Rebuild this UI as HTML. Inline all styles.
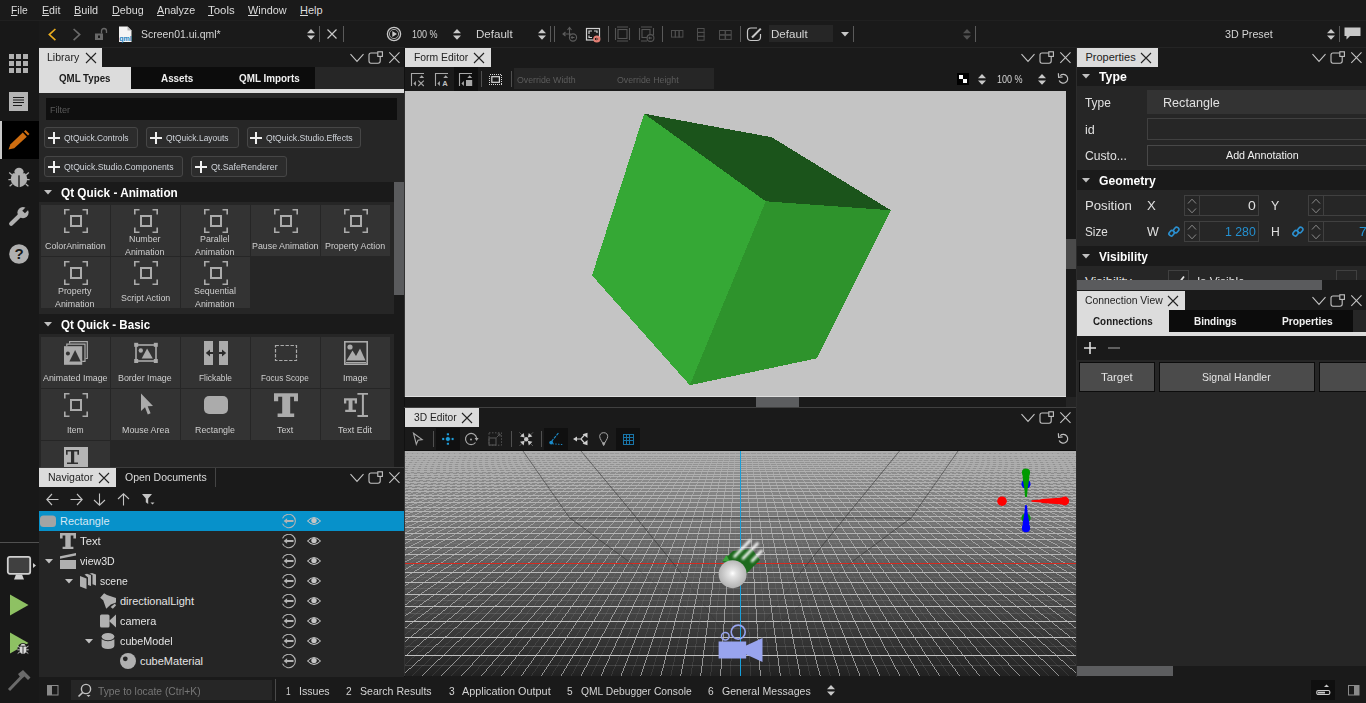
<!DOCTYPE html>
<html><head><meta charset="utf-8"><title>Qt Design Studio</title><style>html,body{margin:0;padding:0}body{width:1366px;height:703px;overflow:hidden;background:#1a1a1a;position:relative;font-family:"Liberation Sans",sans-serif}
body div,.t,.i{position:absolute}div{box-sizing:content-box}
.t{white-space:nowrap;transform-origin:0 50%;display:block}
.i{display:block;overflow:hidden}u{text-decoration-thickness:1px;text-underline-offset:1px}</style></head><body>
<div style="left:404px;top:48px;width:673px;height:629px;background:#1a1a1a;"></div>
<div style="left:404px;top:48px;width:1px;height:629px;background:#111;"></div>
<div style="left:404px;top:91px;width:1px;height:306px;background:#333;"></div>
<div style="left:404px;top:451px;width:1px;height:225px;background:#333;"></div>
<div style="left:405px;top:48px;width:86px;height:19px;background:#dcdcdc;"></div>
<span class="t" style="left:413.70px;top:51px;font-size:11px;line-height:12px;color:#222;transform:scaleX(0.9444);">Form Editor</span>
<svg class="i" style="left:472.7px;top:52.3px;" width="12" height="12" viewBox="0 0 12 12"><path d="M1 1 L11 11 M11 1 L1 11" stroke="#222" stroke-width="1.1" fill="none"/></svg>
<svg class="i" style="left:1020.5px;top:48px;" width="52" height="19" viewBox="0 0 52 19"><g fill="none" stroke="#c4c4c4" stroke-width="1.1"><path d="M0.5 6.2 L7 13.4 L13.5 6.2"/><path d="M27.5 5 H21 Q19 5 19 7 V13 Q19 15.2 21 15.2 H28 Q30.2 15.2 30.2 13 V9"/><rect x="27.8" y="3.8" width="4.6" height="4.6"/><path d="M39.3 4.3 L49.5 14.8 M49.5 4.3 L39.3 14.8"/></g></svg>
<svg class="i" style="left:410px;top:72px;" width="16" height="15" viewBox="0 0 16 15"><path fill="none" stroke="#a8a8a8" stroke-width="1.1" d="M1.5 14 V1.5 H14"/><path d="M11.7 3.3 L14.1 5.9 H9.3Z M3.4 11.5 L5.9 9 V14Z" fill="#a8a8a8"/><path fill="none" stroke="#a8a8a8" stroke-width="1.1" d="M8.3 8.6 L13.8 14 M13.8 8.6 L8.3 14"/></svg>
<svg class="i" style="left:434px;top:72px;" width="16" height="15" viewBox="0 0 16 15"><path fill="none" stroke="#a8a8a8" stroke-width="1.1" d="M1.5 14 V1.5 H14"/><path d="M11.7 3.3 L14.1 5.9 H9.3Z M3.4 11.5 L5.9 9 V14Z" fill="#a8a8a8"/><text x="8.3" y="14" font-family="Liberation Sans, sans-serif" font-size="7.6" font-weight="bold" fill="#c0c0c0">A</text></svg>
<div style="left:454px;top:67px;width:24px;height:24px;background:#0f0f0f;"></div>
<svg class="i" style="left:458px;top:72px;" width="16" height="15" viewBox="0 0 16 15"><path fill="none" stroke="#a8a8a8" stroke-width="1.1" d="M1.5 14 V1.5 H14"/><path d="M11.7 3.3 L14.1 5.9 H9.3Z M3.4 11.5 L5.9 9 V14Z" fill="#a8a8a8"/><rect x="8" y="8" width="6.2" height="6" fill="#a8a8a8"/></svg>
<div style="left:481px;top:71px;width:1px;height:16px;background:#505050;"></div>
<svg class="i" style="left:488px;top:73px;" width="15" height="13" viewBox="0 0 15 13"><rect x="1.5" y="1.5" width="12" height="10" fill="none" stroke="#d8d8d8" stroke-width="1" stroke-dasharray="1 1" shape-rendering="crispEdges"/><rect x="3.8" y="3.7" width="7.6" height="5.6" fill="none" stroke="#d8d8d8" stroke-width="1.2"/></svg>
<div style="left:511px;top:71px;width:1px;height:16px;background:#505050;"></div>
<div style="left:514px;top:68px;width:200px;height:21px;background:#262626;"></div>
<span class="t" style="left:517.00px;top:74px;font-size:9.5px;line-height:11px;color:#5c5c5c;transform:scaleX(0.9245);">Override Width</span>
<span class="t" style="left:617.00px;top:74px;font-size:9.5px;line-height:11px;color:#5c5c5c;transform:scaleX(0.9255);">Override Height</span>
<svg class="i" style="left:957px;top:73px;" width="12" height="12" viewBox="0 0 12 12"><rect width="12" height="12" fill="#000"/><rect x="2" y="2" width="4" height="4" fill="#fff"/><rect x="6" y="6" width="4" height="4" fill="#fff"/></svg>
<svg class="i" style="left:978px;top:73.5px;" width="8" height="11" viewBox="0 0 8 11"><path d="M0 4.2 L4 0 L8 4.2Z M0 6.6 L8 6.6 L4 10.8Z" fill="#c8c8c8"/></svg>
<span class="t" style="left:997.00px;top:73px;font-size:10.5px;line-height:12px;color:#d4d4d4;transform:scaleX(0.8609);">100 %</span>
<svg class="i" style="left:1038px;top:73.5px;" width="8" height="11" viewBox="0 0 8 11"><path d="M0 4.2 L4 0 L8 4.2Z M0 6.6 L8 6.6 L4 10.8Z" fill="#c8c8c8"/></svg>
<svg class="i" style="left:1057px;top:72px;" width="13" height="13" viewBox="0 0 13 13"><path d="M3.2 3.6 A4.4 4.4 0 1 1 2.2 8.4" fill="none" stroke="#c0c0c0" stroke-width="1.2"/><path d="M1.4 1.2 L1.6 5.4 L5.6 4.8" fill="none" stroke="#c0c0c0" stroke-width="1.2"/></svg>
<div style="left:405px;top:91px;width:661px;height:306px;background:#c4c4c4;"></div>
<svg class="i" style="left:405px;top:91px" width="661" height="306" viewBox="405 91 661 306" shape-rendering="crispEdges"><path d="M644.2 113.7 L771.6 137.2 L890.9 210.3 L765.7 201.3Z" fill="#1b541b"/><path d="M644.2 113.7 L765.7 201.3 L689.8 385.2 L592 275.4Z" fill="#35a835"/><path d="M765.7 201.3 L890.9 210.3 L816.6 358.4 L689.8 385.2Z" fill="#2e932c"/></svg>
<div style="left:405px;top:396px;width:661px;height:1px;background:#dedede;"></div>
<div style="left:1066px;top:239px;width:10px;height:30px;background:#4a4a4a;"></div>
<div style="left:1066px;top:397px;width:10px;height:10px;background:#242424;"></div>
<div style="left:756px;top:397px;width:43px;height:10px;background:#5c5d5f;"></div>
<div style="left:404px;top:407px;width:673px;height:1px;background:#404040;"></div>
<div style="left:405px;top:408px;width:74px;height:19px;background:#dcdcdc;"></div>
<span class="t" style="left:413.50px;top:411px;font-size:11px;line-height:12px;color:#222;transform:scaleX(0.9304);">3D Editor</span>
<svg class="i" style="left:460.7px;top:412.3px;" width="12" height="12" viewBox="0 0 12 12"><path d="M1 1 L11 11 M11 1 L1 11" stroke="#222" stroke-width="1.1" fill="none"/></svg>
<svg class="i" style="left:1020.5px;top:408px;" width="52" height="19" viewBox="0 0 52 19"><g fill="none" stroke="#c4c4c4" stroke-width="1.1"><path d="M0.5 6.2 L7 13.4 L13.5 6.2"/><path d="M27.5 5 H21 Q19 5 19 7 V13 Q19 15.2 21 15.2 H28 Q30.2 15.2 30.2 13 V9"/><rect x="27.8" y="3.8" width="4.6" height="4.6"/><path d="M39.3 4.3 L49.5 14.8 M49.5 4.3 L39.3 14.8"/></g></svg>
<svg class="i" style="left:412px;top:432px;" width="13" height="14" viewBox="0 0 13 14"><path d="M1.5 1.2 L10.2 7.6 L6 8.2 L4.3 12.2Z" fill="none" stroke="#a8a8a8" stroke-width="1.1"/></svg>
<div style="left:433px;top:431px;width:1px;height:16px;background:#505050;"></div>
<div style="left:436px;top:428px;width:24px;height:22px;background:#101010;"></div>
<svg class="i" style="left:441px;top:432px;" width="14" height="14" viewBox="0 0 14 14"><path d="M7 2 V12 M2 7 H12" stroke="#1e9cd8" stroke-width="0.6" stroke-opacity="0.45"/><circle cx="6.9" cy="7" r="2.1" fill="#1e9cd8"/><g fill="#1e9cd8"><rect x="5.8" y="1.3" width="2.2" height="1.8"/><rect x="5.8" y="10.9" width="2.2" height="1.8"/><rect x="1.2" y="5.9" width="1.9" height="2.2"/><rect x="10.7" y="5.9" width="1.9" height="2.2"/></g></svg>
<svg class="i" style="left:464px;top:432px;" width="15" height="14" viewBox="0 0 15 14"><path d="M11.5 10.5 A5.6 5.6 0 1 1 12.6 6" fill="none" stroke="#a8a8a8" stroke-width="1.2"/><path d="M10.6 6 H14.6 L12.6 9Z" fill="#a8a8a8"/><circle cx="7" cy="7.5" r="1" fill="#a8a8a8"/></svg>
<svg class="i" style="left:488px;top:432px;" width="15" height="14" viewBox="0 0 15 14"><rect x="1" y="6" width="7" height="7" fill="none" stroke="#555" stroke-width="1.1"/><rect x="1" y="0.8" width="12.5" height="12.4" fill="none" stroke="#555" stroke-width="1" stroke-dasharray="1.5 1.5"/><path d="M8.5 5.5 L12 2 M9.5 2 H12 V4.5" stroke="#555" stroke-width="1" fill="none"/></svg>
<div style="left:511px;top:431px;width:1px;height:16px;background:#505050;"></div>
<svg class="i" style="left:519px;top:432px;" width="15" height="14" viewBox="0 0 15 14"><g fill="#c8c8c8"><circle cx="7.2" cy="7.2" r="2.2"/><path d="M5.6 5.6 L1 4.6 L4.6 1Z M8.8 5.6 L13.4 4.6 L9.8 1Z M5.6 8.8 L1 9.8 L4.6 13.4Z M8.8 8.8 L13.4 9.8 L9.8 13.4Z"/></g><path d="M0.3 0.3 L3 3 M14.1 0.3 L11.4 3 M0.3 14.1 L3 11.4 M14.1 14.1 L11.4 11.4" stroke="#c8c8c8" stroke-width="0.6" stroke-opacity="0.6"/></svg>
<div style="left:541px;top:431px;width:1px;height:16px;background:#505050;"></div>
<div style="left:544px;top:428px;width:24px;height:22px;background:#101010;"></div>
<svg class="i" style="left:549px;top:432px;" width="15" height="14" viewBox="0 0 15 14"><path d="M9.4 1 L1.6 10.6" stroke="#1b8ccb" stroke-width="1.1" stroke-dasharray="3 1" fill="none"/><path d="M3.5 11.8 L14 12.6" stroke="#1b8ccb" stroke-width="1" stroke-dasharray="1.4 1.4" fill="none"/><circle cx="2.2" cy="10.6" r="1.9" fill="#1b8ccb"/></svg>
<svg class="i" style="left:573px;top:432px;" width="15" height="14" viewBox="0 0 15 14"><path d="M3 7 H8 L11.5 3 M8 7 L11.5 11" stroke="#d0d0d0" stroke-width="1.2" fill="none"/><path d="M0 7 L4 4.4 V9.6Z M14.5 0.8 V6 L9.6 2.2Z M14.5 13.2 V8 L9.6 11.8Z" fill="#d0d0d0"/></svg>
<svg class="i" style="left:599px;top:432px;" width="10" height="14" viewBox="0 0 10 14"><path d="M4.7 0.7 C7.8 0.7 8.7 2.7 8.7 4.6 C8.7 7 5.8 9.6 5 13.3 H4.4 C3.6 9.6 0.7 7 0.7 4.6 C0.7 2.7 1.6 0.7 4.7 0.7Z" fill="none" stroke="#a8a8a8" stroke-width="1"/><path d="M3.2 10.2 H6.2 L4.7 13.6Z" fill="#a8a8a8"/></svg>
<div style="left:616px;top:428px;width:24px;height:22px;background:#101010;"></div>
<svg class="i" style="left:622px;top:433px;" width="12" height="12" viewBox="0 0 12 12"><path d="M1.5 1.5 H11 V11 H1.5Z M1.5 4.7 H11 M1.5 7.8 H11 M4.7 1.5 V11 M7.8 1.5 V11" stroke="#1975a8" stroke-width="1" fill="none" shape-rendering="crispEdges"/></svg>
<svg class="i" style="left:1057px;top:432px;" width="13" height="13" viewBox="0 0 13 13"><path d="M3.2 3.6 A4.4 4.4 0 1 1 2.2 8.4" fill="none" stroke="#c0c0c0" stroke-width="1.2"/><path d="M1.4 1.2 L1.6 5.4 L5.6 4.8" fill="none" stroke="#c0c0c0" stroke-width="1.2"/></svg>
<div style="left:404px;top:450px;width:673px;height:1px;background:#0f0f0f;"></div>
<svg class="i" style="left:405px;top:451px" width="671" height="225" viewBox="0 0 671 225"><defs><linearGradient id="gbg" x1="0" y1="0" x2="0" y2="1"><stop offset="0" stop-color="#999"/><stop offset="1" stop-color="#222"/></linearGradient><linearGradient id="gl" gradientUnits="userSpaceOnUse" x1="0" y1="0" x2="0" y2="225"><stop offset="0" stop-color="#aeaeae"/><stop offset="1" stop-color="#c2c2c2"/></linearGradient><linearGradient id="gm" gradientUnits="userSpaceOnUse" x1="0" y1="0" x2="0" y2="225"><stop offset="0.12" stop-color="#fff" stop-opacity="0"/><stop offset="0.45" stop-color="#fff" stop-opacity="0.07"/><stop offset="0.75" stop-color="#fff" stop-opacity="0.12"/><stop offset="1" stop-color="#fff" stop-opacity="0.13"/></linearGradient><radialGradient id="gs" cx="0.5" cy="0.47" r="0.5"><stop offset="0" stop-color="#fff"/><stop offset="0.25" stop-color="#e4e4e4"/><stop offset="1" stop-color="#b4b4b4"/></radialGradient><filter id="bl" x="-0.5" y="-0.5" width="2" height="2"><feGaussianBlur stdDeviation="1.1"/></filter></defs><rect width="671" height="225" fill="url(#gbg)"/><path d="M0 214.5H671M0 195.5H671M0 177.5H671M0 162.5H671M0 149.5H671M0 137.5H671M0 126.5H671M0 116.5H671M0 107.5H671M0 99.5H671M0 92.5H671M0 85.5H671M0 79.5H671M0 73.5H671M0 68.5H671M0 63.5H671M0 58.5H671M0 53.5H671M0 49.5H671M0 46.5H671M0 42.5H671M0 38.5H671M0 35.5H671M0 32.5H671M0 29.5H671M0 27.5H671M0 24.5H671M0 21.5H671M0 19.5H671M0 17.5H671M0 15.5H671M0 13.5H671M0 11.5H671M0 9.5H671M0 7.5H671M0 5.5H671M0 4.5H671M0 2.5H671M0 0.5H671M0 -0.5H671" stroke="url(#gm)" stroke-width="1" fill="none" shape-rendering="crispEdges"/><path d="M2.61 0L-970.11 225M7.69 0L-950.18 225M12.78 0L-930.25 225M17.86 0L-910.31 225M22.94 0L-890.38 225M28.02 0L-870.45 225M33.11 0L-850.51 225M38.19 0L-830.58 225M43.27 0L-810.65 225M48.35 0L-790.71 225M53.43 0L-770.78 225M58.52 0L-750.85 225M63.60 0L-730.92 225M68.68 0L-710.98 225M73.76 0L-691.05 225M78.85 0L-671.12 225M83.93 0L-651.18 225M89.01 0L-631.25 225M94.09 0L-611.32 225M99.18 0L-591.38 225M104.26 0L-571.45 225M109.34 0L-551.52 225M114.42 0L-531.59 225M119.50 0L-511.65 225M124.59 0L-491.72 225M129.67 0L-471.79 225M134.75 0L-451.85 225M139.83 0L-431.92 225M144.92 0L-411.99 225M150.00 0L-392.05 225M155.08 0L-372.12 225M160.16 0L-352.19 225M165.24 0L-332.26 225M170.33 0L-312.32 225M175.41 0L-292.39 225M180.49 0L-272.46 225M185.57 0L-252.52 225M190.66 0L-232.59 225M195.74 0L-212.66 225M200.82 0L-192.72 225M205.90 0L-172.79 225M210.98 0L-152.86 225M216.07 0L-132.93 225M221.15 0L-112.99 225M226.23 0L-93.06 225M231.31 0L-73.13 225M236.40 0L-53.19 225M241.48 0L-33.26 225M246.56 0L-13.33 225M251.64 0L6.61 225M256.73 0L26.54 225M261.81 0L46.47 225M266.89 0L66.40 225M271.97 0L86.34 225M277.05 0L106.27 225M282.14 0L126.20 225M287.22 0L146.14 225M292.30 0L166.07 225M297.38 0L186.00 225M302.47 0L205.94 225M307.55 0L225.87 225M312.63 0L245.80 225M317.71 0L265.73 225M322.79 0L285.67 225M327.88 0L305.60 225M332.96 0L325.53 225M338.04 0L345.47 225M343.12 0L365.40 225M348.21 0L385.33 225M353.29 0L405.27 225M358.37 0L425.20 225M363.45 0L445.13 225M368.53 0L465.06 225M373.62 0L485.00 225M378.70 0L504.93 225M383.78 0L524.86 225M388.86 0L544.80 225M393.95 0L564.73 225M399.03 0L584.66 225M404.11 0L604.60 225M409.19 0L624.53 225M414.27 0L644.46 225M419.36 0L664.39 225M424.44 0L684.33 225M429.52 0L704.26 225M434.60 0L724.19 225M439.69 0L744.13 225M444.77 0L764.06 225M449.85 0L783.99 225M454.93 0L803.93 225M460.02 0L823.86 225M465.10 0L843.79 225M470.18 0L863.72 225M475.26 0L883.66 225M480.34 0L903.59 225M485.43 0L923.52 225M490.51 0L943.46 225M495.59 0L963.39 225M500.67 0L983.32 225M505.76 0L1003.26 225M510.84 0L1023.19 225M515.92 0L1043.12 225M521.00 0L1063.05 225M526.08 0L1082.99 225M531.17 0L1102.92 225M536.25 0L1122.85 225M541.33 0L1142.79 225M546.41 0L1162.72 225M551.50 0L1182.65 225M556.58 0L1202.59 225M561.66 0L1222.52 225M566.74 0L1242.45 225M571.82 0L1262.38 225M576.91 0L1282.32 225M581.99 0L1302.25 225M587.07 0L1322.18 225M592.15 0L1342.12 225M597.24 0L1362.05 225M602.32 0L1381.98 225M607.40 0L1401.92 225M612.48 0L1421.85 225M617.57 0L1441.78 225M622.65 0L1461.71 225M627.73 0L1481.65 225M632.81 0L1501.58 225M637.89 0L1521.51 225M642.98 0L1541.45 225M648.06 0L1561.38 225M653.14 0L1581.31 225M658.22 0L1601.25 225M663.31 0L1621.18 225M668.39 0L1641.11 225" stroke="url(#gm)" stroke-width="0.7" fill="none" shape-rendering="crispEdges"/><path d="M0.07 0L-980.08 225M5.15 0L-960.15 225M10.24 0L-940.21 225M15.32 0L-920.28 225M20.40 0L-900.35 225M25.48 0L-880.41 225M30.56 0L-860.48 225M35.65 0L-840.55 225M40.73 0L-820.61 225M45.81 0L-800.68 225M50.89 0L-780.75 225M55.98 0L-760.82 225M61.06 0L-740.88 225M66.14 0L-720.95 225M71.22 0L-701.02 225M76.30 0L-681.08 225M81.39 0L-661.15 225M86.47 0L-641.22 225M91.55 0L-621.28 225M96.63 0L-601.35 225M101.72 0L-581.42 225M106.80 0L-561.49 225M111.88 0L-541.55 225M116.96 0L-521.62 225M122.05 0L-501.69 225M127.13 0L-481.75 225M132.21 0L-461.82 225M137.29 0L-441.89 225M142.37 0L-421.95 225M147.46 0L-402.02 225M152.54 0L-382.09 225M157.62 0L-362.16 225M162.70 0L-342.22 225M167.79 0L-322.29 225M172.87 0L-302.36 225M177.95 0L-282.42 225M183.03 0L-262.49 225M188.11 0L-242.56 225M193.20 0L-222.62 225M198.28 0L-202.69 225M203.36 0L-182.76 225M208.44 0L-162.83 225M213.53 0L-142.89 225M218.61 0L-122.96 225M223.69 0L-103.03 225M228.77 0L-83.09 225M233.85 0L-63.16 225M238.94 0L-43.23 225M244.02 0L-23.29 225M249.10 0L-3.36 225M254.18 0L16.57 225M259.27 0L36.50 225M264.35 0L56.44 225M269.43 0L76.37 225M274.51 0L96.30 225M279.60 0L116.24 225M284.68 0L136.17 225M289.76 0L156.10 225M294.84 0L176.04 225M299.92 0L195.97 225M305.01 0L215.90 225M310.09 0L235.83 225M315.17 0L255.77 225M320.25 0L275.70 225M325.34 0L295.63 225M330.42 0L315.57 225M340.58 0L355.43 225M345.66 0L375.37 225M350.75 0L395.30 225M355.83 0L415.23 225M360.91 0L435.17 225M365.99 0L455.10 225M371.08 0L475.03 225M376.16 0L494.96 225M381.24 0L514.90 225M386.32 0L534.83 225M391.40 0L554.76 225M396.49 0L574.70 225M401.57 0L594.63 225M406.65 0L614.56 225M411.73 0L634.50 225M416.82 0L654.43 225M421.90 0L674.36 225M426.98 0L694.29 225M432.06 0L714.23 225M437.15 0L734.16 225M442.23 0L754.09 225M447.31 0L774.03 225M452.39 0L793.96 225M457.47 0L813.89 225M462.56 0L833.83 225M467.64 0L853.76 225M472.72 0L873.69 225M477.80 0L893.62 225M482.89 0L913.56 225M487.97 0L933.49 225M493.05 0L953.42 225M498.13 0L973.36 225M503.21 0L993.29 225M508.30 0L1013.22 225M513.38 0L1033.16 225M518.46 0L1053.09 225M523.54 0L1073.02 225M528.63 0L1092.95 225M533.71 0L1112.89 225M538.79 0L1132.82 225M543.87 0L1152.75 225M548.95 0L1172.69 225M554.04 0L1192.62 225M559.12 0L1212.55 225M564.20 0L1232.49 225M569.28 0L1252.42 225M574.37 0L1272.35 225M579.45 0L1292.28 225M584.53 0L1312.22 225M589.61 0L1332.15 225M594.70 0L1352.08 225M599.78 0L1372.02 225M604.86 0L1391.95 225M609.94 0L1411.88 225M615.02 0L1431.82 225M620.11 0L1451.75 225M625.19 0L1471.68 225M630.27 0L1491.61 225M635.35 0L1511.55 225M640.44 0L1531.48 225M645.52 0L1551.41 225M650.60 0L1571.35 225M655.68 0L1591.28 225M660.76 0L1611.21 225M665.85 0L1631.15 225M670.93 0L1651.08 225" stroke="url(#gl)" stroke-width="0.7" fill="none" shape-rendering="crispEdges"/><path d="M0 225.5H671M0 204.5H671M0 186.5H671M0 170.5H671M0 155.5H671M0 143.5H671M0 131.5H671M0 121.5H671M0 112.5H671M0 103.5H671M0 96.5H671M0 88.5H671M0 82.5H671M0 76.5H671M0 70.5H671M0 65.5H671M0 60.5H671M0 56.5H671M0 51.5H671M0 47.5H671M0 44.5H671M0 40.5H671M0 37.5H671M0 34.5H671M0 31.5H671M0 28.5H671M0 25.5H671M0 23.5H671M0 20.5H671M0 18.5H671M0 16.5H671M0 14.5H671M0 12.5H671M0 10.5H671M0 8.5H671M0 6.5H671M0 4.5H671M0 3.5H671M0 1.5H671M0 0.5H671" stroke="url(#gl)" stroke-width="1" fill="none" shape-rendering="crispEdges"/><path d="M0 112.5H671" stroke="#d42a20" stroke-width="1" shape-rendering="crispEdges"/><path d="M335.5 0V225" stroke="#16a0dc" stroke-width="1" shape-rendering="crispEdges"/><path d="M118.0 0.0L164.4 66.5L223.0 110.0 M176.0 0.0L231.6 67.0L276.0 122.0 M164.4 66.9H506.5 M553.0 0.0L506.5 66.5L448.0 110.0 M494.5 0.0L439.7 67.0L395.0 122.0" stroke="#2a2a2a" stroke-opacity="0.62" stroke-width="0.9" fill="none"/><path d="M223.0 110.0L317.0 189.0 M276.0 122.0L321.0 185.0 M448.0 110.0L354.0 189.0 M395.0 122.0L350.0 185.0" stroke="#2a2a2a" stroke-opacity="0.25" stroke-width="1" fill="none"/><path d="M317.5 110.0L328.0 100.0L347.0 98.0L355.0 109.0L342.0 122.0L330.0 119.0Z" fill="#1d6a1d"/><path d="M317.5 110.0L321.5 104.0L325.0 111.0Z" fill="#3aa63a"/><g stroke="#fff" stroke-width="2.6" stroke-linecap="round" stroke-opacity="0.95" fill="none" filter="url(#bl)"><path d="M329.6 105.5L345.0 89.5 M338.0 107.5L352.5 92.5 M347.0 110.0L356.6 100.0"/></g><circle cx="327.6" cy="123.20000000000005" r="14" fill="url(#gs)"/><rect x="313.6" y="190.5" width="27.6" height="17" fill="#98a4ee"/><path d="M339.0 195.5L357.5 187.0V211L339.0 202.5Z" fill="#98a4ee"/><circle cx="320.3" cy="185.3" r="3.8" fill="none" stroke="#98a4ee" stroke-width="1.5"/><circle cx="333.2" cy="181.1" r="7" fill="none" stroke="#98a4ee" stroke-width="1.6"/><circle cx="621" cy="33.0" r="4.6" fill="#0000ff"/><circle cx="621" cy="67.0" r="4.6" fill="#009a00"/><circle cx="621" cy="21.6" r="4.1" fill="#009a00"/><path d="M617.6 23.0L624.4 23.0L624.2 28.0L622.6 38.0L622 46.0H620L619.4 38.0L617.8 28.0Z" fill="#009a00"/><circle cx="621" cy="77.2" r="4.1" fill="#0000ff"/><path d="M617.6 76.0L624.4 76.0L624.2 71.0L622.6 62.0L622 54.3H620L619.4 62.0L617.8 71.0Z" fill="#0000ff"/><circle cx="597" cy="50.2" r="4.8" fill="#ff0000"/><circle cx="659.8" cy="50.0" r="4.4" fill="#ff0000"/><path d="M626.5 49.3L636 48.6L637 47.9L658 46.4V53.6L637 52.1L636 51.4L626.5 50.7Z" fill="#ff0000"/></svg>
<div style="left:1076px;top:48px;width:1px;height:629px;background:#2c2c2c;"></div>
<div style="left:39px;top:48px;width:365px;height:419px;background:#1a1a1a;"></div>
<div style="left:39px;top:48px;width:63px;height:19px;background:#dcdcdc;"></div>
<span class="t" style="left:47.30px;top:51px;font-size:11px;line-height:12px;color:#222;transform:scaleX(0.9565);">Library</span>
<svg class="i" style="left:84.7px;top:52.3px;" width="12" height="12" viewBox="0 0 12 12"><path d="M1 1 L11 11 M11 1 L1 11" stroke="#222" stroke-width="1.1" fill="none"/></svg>
<svg class="i" style="left:349.5px;top:48px;" width="52" height="19" viewBox="0 0 52 19"><g fill="none" stroke="#c4c4c4" stroke-width="1.1"><path d="M0.5 6.2 L7 13.4 L13.5 6.2"/><path d="M27.5 5 H21 Q19 5 19 7 V13 Q19 15.2 21 15.2 H28 Q30.2 15.2 30.2 13 V9"/><rect x="27.8" y="3.8" width="4.6" height="4.6"/><path d="M39.3 4.3 L49.5 14.8 M49.5 4.3 L39.3 14.8"/></g></svg>
<div style="left:39px;top:67px;width:92px;height:22px;background:#dcdcdc;"></div>
<div style="left:131px;top:67px;width:184px;height:22px;background:#0c0c0c;"></div>
<div style="left:315px;top:67px;width:89px;height:22px;background:#262626;"></div>
<div style="left:39px;top:89px;width:365px;height:4px;background:#dcdcdc;"></div>
<span class="t" style="left:59.40px;top:72px;font-size:11px;line-height:12px;color:#1a1a1a;font-weight:bold;transform:scaleX(0.8831);">QML Types</span>
<span class="t" style="left:161.40px;top:72px;font-size:11px;line-height:12px;color:#f0f0f0;font-weight:bold;transform:scaleX(0.8970);">Assets</span>
<span class="t" style="left:239.00px;top:72px;font-size:11px;line-height:12px;color:#f0f0f0;font-weight:bold;transform:scaleX(0.8969);">QML Imports</span>
<div style="left:39px;top:93px;width:365px;height:89px;background:#262626;"></div>
<div style="left:39px;top:182px;width:355px;height:285px;background:#262626;"></div>
<div style="left:46px;top:98px;width:351px;height:22px;background:#0f0f0f;"></div>
<span class="t" style="left:49.50px;top:104px;font-size:9.5px;line-height:11px;color:#585858;transform:scaleX(0.9507);">Filter</span>
<div style="left:44px;top:127px;width:92px;height:19px;background:#2c2c2c;border:1px solid #464646;border-radius:3px;"></div>
<svg class="i" style="left:47.5px;top:131.5px;" width="12" height="12" viewBox="0 0 12 12"><path d="M6 0 V12 M0 6 H12" stroke="#f0f0f0" stroke-width="2" fill="none"/></svg>
<span class="t" style="left:64.00px;top:132px;font-size:9.5px;line-height:11px;color:#d0d4da;transform:scaleX(0.8928);">QtQuick.Controls</span>
<div style="left:146px;top:127px;width:90.5px;height:19px;background:#2c2c2c;border:1px solid #464646;border-radius:3px;"></div>
<svg class="i" style="left:149.5px;top:131.5px;" width="12" height="12" viewBox="0 0 12 12"><path d="M6 0 V12 M0 6 H12" stroke="#f0f0f0" stroke-width="2" fill="none"/></svg>
<span class="t" style="left:166.00px;top:132px;font-size:9.5px;line-height:11px;color:#d0d4da;transform:scaleX(0.8910);">QtQuick.Layouts</span>
<div style="left:246.5px;top:127px;width:112.5px;height:19px;background:#2c2c2c;border:1px solid #464646;border-radius:3px;"></div>
<svg class="i" style="left:250.0px;top:131.5px;" width="12" height="12" viewBox="0 0 12 12"><path d="M6 0 V12 M0 6 H12" stroke="#f0f0f0" stroke-width="2" fill="none"/></svg>
<span class="t" style="left:265.70px;top:132px;font-size:9.5px;line-height:11px;color:#d0d4da;transform:scaleX(0.9085);">QtQuick.Studio.Effects</span>
<div style="left:44px;top:156px;width:136.7px;height:19px;background:#2c2c2c;border:1px solid #464646;border-radius:3px;"></div>
<svg class="i" style="left:47.5px;top:160.5px;" width="12" height="12" viewBox="0 0 12 12"><path d="M6 0 V12 M0 6 H12" stroke="#f0f0f0" stroke-width="2" fill="none"/></svg>
<span class="t" style="left:64.00px;top:161px;font-size:9.5px;line-height:11px;color:#d0d4da;transform:scaleX(0.9101);">QtQuick.Studio.Components</span>
<div style="left:191px;top:156px;width:93.5px;height:19px;background:#2c2c2c;border:1px solid #464646;border-radius:3px;"></div>
<svg class="i" style="left:194.5px;top:160.5px;" width="12" height="12" viewBox="0 0 12 12"><path d="M6 0 V12 M0 6 H12" stroke="#f0f0f0" stroke-width="2" fill="none"/></svg>
<span class="t" style="left:211.00px;top:161px;font-size:9.5px;line-height:11px;color:#d0d4da;transform:scaleX(0.9270);">Qt.SafeRenderer</span>
<div style="left:39px;top:182px;width:355px;height:20px;background:#1a1a1a;"></div>
<svg class="i" style="left:44px;top:190px;" width="8" height="5" viewBox="0 0 8 5"><path d="M0 0 H8 L4 4.6Z" fill="#c0c0c0"/></svg>
<span class="t" style="left:61.00px;top:185px;font-size:13px;line-height:15px;color:#ffffff;font-weight:bold;transform:scaleX(0.9067);">Qt Quick - Animation</span>
<div style="left:39px;top:314px;width:355px;height:20px;background:#1a1a1a;"></div>
<svg class="i" style="left:44px;top:322px;" width="8" height="5" viewBox="0 0 8 5"><path d="M0 0 H8 L4 4.6Z" fill="#c0c0c0"/></svg>
<span class="t" style="left:61.00px;top:317px;font-size:13px;line-height:15px;color:#ffffff;font-weight:bold;transform:scaleX(0.8881);">Qt Quick - Basic</span>
<div style="left:41px;top:205px;width:69px;height:51px;background:#333;overflow:hidden;"></div>
<svg class="i" style="left:64px;top:209px;" width="24" height="24" viewBox="0 0 24 24"><g fill="none" stroke="#ababab"><path stroke-width="1.6" d="M0.8 5.5 V0.8 H5.5 M18.5 0.8 H23.2 V5.5 M23.2 18.5 V23.2 H18.5 M5.5 23.2 H0.8 V18.5"/><rect x="7" y="7" width="10" height="10" stroke-width="2"/></g></svg>
<span class="t" style="left:44.90px;top:241px;font-size:9px;line-height:10px;color:#cfcfcf;transform:scaleX(0.9850);">ColorAnimation</span>
<div style="left:111px;top:205px;width:69px;height:51px;background:#333;overflow:hidden;"></div>
<svg class="i" style="left:134px;top:209px;" width="24" height="24" viewBox="0 0 24 24"><g fill="none" stroke="#ababab"><path stroke-width="1.6" d="M0.8 5.5 V0.8 H5.5 M18.5 0.8 H23.2 V5.5 M23.2 18.5 V23.2 H18.5 M5.5 23.2 H0.8 V18.5"/><rect x="7" y="7" width="10" height="10" stroke-width="2"/></g></svg>
<span class="t" style="left:129.44px;top:234px;font-size:9px;line-height:10px;color:#cfcfcf;transform:scaleX(0.9850);">Number</span>
<div style="left:111px;top:205px;width:69px;height:51px;overflow:hidden">
<span class="t" style="left:14.49px;top:42px;font-size:9px;line-height:10px;color:#cfcfcf;transform:scaleX(0.9850);">Animation</span>
</div>
<div style="left:181px;top:205px;width:69px;height:51px;background:#333;overflow:hidden;"></div>
<svg class="i" style="left:204px;top:209px;" width="24" height="24" viewBox="0 0 24 24"><g fill="none" stroke="#ababab"><path stroke-width="1.6" d="M0.8 5.5 V0.8 H5.5 M18.5 0.8 H23.2 V5.5 M23.2 18.5 V23.2 H18.5 M5.5 23.2 H0.8 V18.5"/><rect x="7" y="7" width="10" height="10" stroke-width="2"/></g></svg>
<span class="t" style="left:200.42px;top:234px;font-size:9px;line-height:10px;color:#cfcfcf;transform:scaleX(0.9850);">Parallel</span>
<div style="left:181px;top:205px;width:69px;height:51px;overflow:hidden">
<span class="t" style="left:14.49px;top:42px;font-size:9px;line-height:10px;color:#cfcfcf;transform:scaleX(0.9850);">Animation</span>
</div>
<div style="left:251px;top:205px;width:69px;height:51px;background:#333;overflow:hidden;"></div>
<svg class="i" style="left:274px;top:209px;" width="24" height="24" viewBox="0 0 24 24"><g fill="none" stroke="#ababab"><path stroke-width="1.6" d="M0.8 5.5 V0.8 H5.5 M18.5 0.8 H23.2 V5.5 M23.2 18.5 V23.2 H18.5 M5.5 23.2 H0.8 V18.5"/><rect x="7" y="7" width="10" height="10" stroke-width="2"/></g></svg>
<span class="t" style="left:251.93px;top:241px;font-size:9px;line-height:10px;color:#cfcfcf;transform:scaleX(0.9850);">Pause Animation</span>
<div style="left:321px;top:205px;width:69px;height:51px;background:#333;overflow:hidden;"></div>
<svg class="i" style="left:344px;top:209px;" width="24" height="24" viewBox="0 0 24 24"><g fill="none" stroke="#ababab"><path stroke-width="1.6" d="M0.8 5.5 V0.8 H5.5 M18.5 0.8 H23.2 V5.5 M23.2 18.5 V23.2 H18.5 M5.5 23.2 H0.8 V18.5"/><rect x="7" y="7" width="10" height="10" stroke-width="2"/></g></svg>
<span class="t" style="left:325.14px;top:241px;font-size:9px;line-height:10px;color:#cfcfcf;transform:scaleX(0.9850);">Property Action</span>
<div style="left:41px;top:257px;width:69px;height:51px;background:#333;overflow:hidden;"></div>
<svg class="i" style="left:64px;top:261px;" width="24" height="24" viewBox="0 0 24 24"><g fill="none" stroke="#ababab"><path stroke-width="1.6" d="M0.8 5.5 V0.8 H5.5 M18.5 0.8 H23.2 V5.5 M23.2 18.5 V23.2 H18.5 M5.5 23.2 H0.8 V18.5"/><rect x="7" y="7" width="10" height="10" stroke-width="2"/></g></svg>
<span class="t" style="left:58.45px;top:286px;font-size:9px;line-height:10px;color:#cfcfcf;transform:scaleX(0.9850);">Property</span>
<div style="left:41px;top:257px;width:69px;height:51px;overflow:hidden">
<span class="t" style="left:14.49px;top:42px;font-size:9px;line-height:10px;color:#cfcfcf;transform:scaleX(0.9850);">Animation</span>
</div>
<div style="left:111px;top:257px;width:69px;height:51px;background:#333;overflow:hidden;"></div>
<svg class="i" style="left:134px;top:261px;" width="24" height="24" viewBox="0 0 24 24"><g fill="none" stroke="#ababab"><path stroke-width="1.6" d="M0.8 5.5 V0.8 H5.5 M18.5 0.8 H23.2 V5.5 M23.2 18.5 V23.2 H18.5 M5.5 23.2 H0.8 V18.5"/><rect x="7" y="7" width="10" height="10" stroke-width="2"/></g></svg>
<span class="t" style="left:120.56px;top:293px;font-size:9px;line-height:10px;color:#cfcfcf;transform:scaleX(0.9850);">Script Action</span>
<div style="left:181px;top:257px;width:69px;height:51px;background:#333;overflow:hidden;"></div>
<svg class="i" style="left:204px;top:261px;" width="24" height="24" viewBox="0 0 24 24"><g fill="none" stroke="#ababab"><path stroke-width="1.6" d="M0.8 5.5 V0.8 H5.5 M18.5 0.8 H23.2 V5.5 M23.2 18.5 V23.2 H18.5 M5.5 23.2 H0.8 V18.5"/><rect x="7" y="7" width="10" height="10" stroke-width="2"/></g></svg>
<span class="t" style="left:194.25px;top:286px;font-size:9px;line-height:10px;color:#cfcfcf;transform:scaleX(0.9850);">Sequential</span>
<div style="left:181px;top:257px;width:69px;height:51px;overflow:hidden">
<span class="t" style="left:14.49px;top:42px;font-size:9px;line-height:10px;color:#cfcfcf;transform:scaleX(0.9850);">Animation</span>
</div>
<div style="left:41px;top:337px;width:69px;height:51px;background:#333;overflow:hidden;"></div>
<svg class="i" style="left:64px;top:341px;" width="24" height="24" viewBox="0 0 24 24"><g fill="none" stroke="#ababab" stroke-width="1.2"><path d="M5.6 2.6 V0.7 H23.3 V17.5 H21.6"/><path d="M2.8 5.2 V3.1 H21 V20.4 H18.2"/></g><rect x="0" y="5.2" width="18.2" height="18.6" fill="#ababab"/><path d="M5.4 20.6 L11.1 9.1 L16.7 20.6Z" fill="#333"/><circle cx="3.9" cy="12.4" r="2" fill="#333"/></svg>
<span class="t" style="left:42.92px;top:373px;font-size:9px;line-height:10px;color:#cfcfcf;transform:scaleX(0.9850);">Animated Image</span>
<div style="left:111px;top:337px;width:69px;height:51px;background:#333;overflow:hidden;"></div>
<svg class="i" style="left:134px;top:341px;" width="24" height="24" viewBox="0 0 24 24"><rect x="2" y="4" width="20" height="16" fill="none" stroke="#ababab" stroke-width="1.6"/><g fill="#ababab"><rect x="0.2" y="1.8" width="4" height="4"/><rect x="19.8" y="1.8" width="4" height="4"/><rect x="0.2" y="18" width="4" height="4"/><rect x="19.8" y="18" width="4" height="4"/><path d="M7.7 17.5 L13.1 7.5 L18.8 17.5Z"/><circle cx="6.8" cy="9.5" r="2.2"/></g></svg>
<span class="t" style="left:118.35px;top:373px;font-size:9px;line-height:10px;color:#cfcfcf;transform:scaleX(0.9850);">Border Image</span>
<div style="left:181px;top:337px;width:69px;height:51px;background:#333;overflow:hidden;"></div>
<svg class="i" style="left:204px;top:341px;" width="24" height="24" viewBox="0 0 24 24"><rect x="0" y="0" width="9" height="24" fill="#ababab"/><rect x="15" y="0" width="9" height="24" fill="#ababab"/><path d="M1.8 12 L6 8.4 V11 H9 V13 H6 V15.6Z M22.2 12 L18 8.4 V11 H15 V13 H18 V15.6Z" fill="#2a2a2a"/></svg>
<span class="t" style="left:198.70px;top:373px;font-size:9px;line-height:10px;color:#cfcfcf;transform:scaleX(0.9293);">Flickable</span>
<div style="left:251px;top:337px;width:69px;height:51px;background:#333;overflow:hidden;"></div>
<svg class="i" style="left:274px;top:341px;" width="24" height="24" viewBox="0 0 24 24"><rect x="1.5" y="4.5" width="21" height="15" fill="none" stroke="#ababab" stroke-width="1.2" stroke-dasharray="3.4 1.6"/></svg>
<span class="t" style="left:261.35px;top:373px;font-size:9px;line-height:10px;color:#cfcfcf;transform:scaleX(0.9081);">Focus Scope</span>
<div style="left:321px;top:337px;width:69px;height:51px;background:#333;overflow:hidden;"></div>
<svg class="i" style="left:344px;top:341px;" width="24" height="24" viewBox="0 0 24 24"><rect x="0.8" y="0.8" width="22.4" height="22.4" fill="none" stroke="#ababab" stroke-width="1.6"/><path d="M2.5 19.5 L8.5 9.5 L12 15 L16 7.5 L21.5 19.5Z" fill="#ababab"/><circle cx="6" cy="6" r="2.6" fill="#ababab"/><path d="M2 21.5 H22" stroke="#ababab" stroke-width="1"/></svg>
<span class="t" style="left:342.88px;top:373px;font-size:9px;line-height:10px;color:#cfcfcf;transform:scaleX(0.9850);">Image</span>
<div style="left:41px;top:389px;width:69px;height:51px;background:#333;overflow:hidden;"></div>
<svg class="i" style="left:64px;top:393px;" width="24" height="24" viewBox="0 0 24 24"><g fill="none" stroke="#ababab"><path stroke-width="1.6" d="M0.8 5.5 V0.8 H5.5 M18.5 0.8 H23.2 V5.5 M23.2 18.5 V23.2 H18.5 M5.5 23.2 H0.8 V18.5"/><rect x="7" y="7" width="10" height="10" stroke-width="2"/></g></svg>
<span class="t" style="left:66.90px;top:425px;font-size:9px;line-height:10px;color:#cfcfcf;transform:scaleX(0.9484);">Item</span>
<div style="left:111px;top:389px;width:69px;height:51px;background:#333;overflow:hidden;"></div>
<svg class="i" style="left:134px;top:393px;" width="24" height="24" viewBox="0 0 24 24"><path d="M7 0.5 V18 L11 14.3 L13.8 21.5 L16.6 20.3 L13.7 13.3 L19 13Z" fill="#ababab"/></svg>
<span class="t" style="left:121.55px;top:425px;font-size:9px;line-height:10px;color:#cfcfcf;transform:scaleX(0.9850);">Mouse Area</span>
<div style="left:181px;top:389px;width:69px;height:51px;background:#333;overflow:hidden;"></div>
<svg class="i" style="left:204px;top:393px;" width="24" height="24" viewBox="0 0 24 24"><rect x="0" y="3" width="24" height="18" rx="5" fill="#ababab"/></svg>
<span class="t" style="left:195.24px;top:425px;font-size:9px;line-height:10px;color:#cfcfcf;transform:scaleX(0.9850);">Rectangle</span>
<div style="left:251px;top:389px;width:69px;height:51px;background:#333;overflow:hidden;"></div>
<svg class="i" style="left:274px;top:393px;" width="24" height="24" viewBox="0 0 24 24"><path d="M0 0.2 H24 V8.3 H20 V3.7 H16.2 V20.6 H20.2 V24 H3.6 V20.6 H8.2 V3.7 H4.2 V8.3 H0Z" fill="#ababab"/></svg>
<span class="t" style="left:277.07px;top:425px;font-size:9px;line-height:10px;color:#cfcfcf;transform:scaleX(0.9850);">Text</span>
<div style="left:321px;top:389px;width:69px;height:51px;background:#333;overflow:hidden;"></div>
<svg class="i" style="left:344px;top:393px;" width="24" height="24" viewBox="0 0 24 24"><path d="M0 5.2 H13 V10.6 H10.7 V7.5 H8.5 V16.8 H12 V19 H1.2 V16.8 H4.6 V7.5 H2.3 V10.6 H0Z" fill="#ababab"/><path d="M18.9 1 V23 M13.4 0.8 H24 M13.4 23.1 H24" stroke="#ababab" stroke-width="2" fill="none"/></svg>
<span class="t" style="left:338.20px;top:425px;font-size:9px;line-height:10px;color:#cfcfcf;transform:scaleX(0.9850);">Text Edit</span>
<div style="left:41px;top:441px;width:69px;height:26px;background:#333;overflow:hidden;"></div>
<svg class="i" style="left:64px;top:445px;" width="24" height="24" viewBox="0 0 24 24"><rect x="0" y="2" width="24" height="20" fill="#b4b4b4"/><path d="M2 5 H15 V9.7 H13.4 V6.6 H10.2 V17.4 H14 V19 H3 V17.4 H7 V6.6 H3.6 V9.7 H2Z" fill="#2e2e2e"/></svg>
<div style="left:394px;top:182px;width:10px;height:285px;background:#1a1a1a;"></div>
<div style="left:394px;top:182px;width:10px;height:113px;background:#5a5b5d;"></div>
<div style="left:39px;top:467px;width:365px;height:1px;background:#3c3c3c;"></div>
<div style="left:39px;top:468px;width:365px;height:43px;background:#1a1a1a;"></div>
<div style="left:39px;top:468px;width:77px;height:19px;background:#dcdcdc;"></div>
<span class="t" style="left:47.50px;top:471px;font-size:11px;line-height:12px;color:#222;transform:scaleX(0.9593);">Navigator</span>
<svg class="i" style="left:97.7px;top:472.3px;" width="12" height="12" viewBox="0 0 12 12"><path d="M1 1 L11 11 M11 1 L1 11" stroke="#222" stroke-width="1.1" fill="none"/></svg>
<span class="t" style="left:125.00px;top:471px;font-size:11px;line-height:12px;color:#dcdcdc;transform:scaleX(0.9540);">Open Documents</span>
<div style="left:215px;top:468px;width:1px;height:19px;background:#444;"></div>
<svg class="i" style="left:349.5px;top:468px;" width="52" height="19" viewBox="0 0 52 19"><g fill="none" stroke="#c4c4c4" stroke-width="1.1"><path d="M0.5 6.2 L7 13.4 L13.5 6.2"/><path d="M27.5 5 H21 Q19 5 19 7 V13 Q19 15.2 21 15.2 H28 Q30.2 15.2 30.2 13 V9"/><rect x="27.8" y="3.8" width="4.6" height="4.6"/><path d="M39.3 4.3 L49.5 14.8 M49.5 4.3 L39.3 14.8"/></g></svg>
<svg class="i" style="left:46px;top:493px;" width="13" height="13" viewBox="0 0 13 13"><path fill="none" stroke="#c4c4c4" stroke-width="1.1" d="M12.5 6.5 H1 M6 1 L0.8 6.5 L6 12"/></svg>
<svg class="i" style="left:70px;top:493px;" width="13" height="13" viewBox="0 0 13 13"><path fill="none" stroke="#c4c4c4" stroke-width="1.1" d="M0.5 6.5 H12 M7 1 L12.2 6.5 L7 12"/></svg>
<svg class="i" style="left:93px;top:493px;" width="13" height="13" viewBox="0 0 13 13"><path fill="none" stroke="#c4c4c4" stroke-width="1.1" d="M6.5 0.5 V12 M1 7 L6.5 12.2 L12 7"/></svg>
<svg class="i" style="left:117px;top:493px;" width="13" height="13" viewBox="0 0 13 13"><path fill="none" stroke="#c4c4c4" stroke-width="1.1" d="M6.5 12.5 V1 M1 6 L6.5 0.8 L12 6"/></svg>
<svg class="i" style="left:142px;top:494px;" width="14" height="12" viewBox="0 0 14 12"><path d="M0 0 H10 L6.2 4.6 V10 L3.8 8.2 V4.6Z" fill="#c4c4c4"/><path d="M8.5 8.5 H12.5 L10.5 10.5Z" fill="#c4c4c4"/></svg>
<div style="left:39px;top:511px;width:365px;height:166px;background:#252525;"></div>
<div style="left:39px;top:511px;width:365px;height:20px;background:#0791ca;"></div>
<svg class="i" style="left:40px;top:513px;" width="16" height="16" viewBox="0 0 16 16"><rect x="0" y="2.5" width="16" height="11.5" rx="3.5" fill="#a4a4a4"/></svg>
<span class="t" style="left:60.00px;top:515px;font-size:11px;line-height:12px;color:#d4e8f4;">Rectangle</span>
<svg class="i" style="left:281.3px;top:514px;" width="15" height="15" viewBox="0 0 15 15"><path d="M1.53 4.38 A6.7 6.7 0 1 1 1.53 9.62" fill="none" stroke="#b4b4b4" stroke-width="1.1"/><path d="M2.6 7 L6.1 4.3 V5.9 H12.5 V8.1 H6.1 V9.7Z" fill="#b4b4b4"/></svg>
<svg class="i" style="left:307px;top:515.8px;" width="14" height="11" viewBox="0 0 14 11"><path d="M0.6 5 Q7 -1.9 13.4 5 Q7 11.9 0.6 5Z" fill="none" stroke="#c4c4c4" stroke-width="1.1"/><circle cx="7" cy="4.6" r="2.7" fill="#c4c4c4"/></svg>
<svg class="i" style="left:60px;top:533px;" width="16" height="16" viewBox="0 0 16 16"><path d="M0 0 H16 V5.5 H13.4 V2.4 H10.7 V13.8 H13.4 V16 H2.6 V13.8 H5.3 V2.4 H2.6 V5.5 H0Z" fill="#b0b0b0"/></svg>
<span class="t" style="left:80.00px;top:535px;font-size:11px;line-height:12px;color:#e4e4e4;transform:scaleX(1.0241);">Text</span>
<svg class="i" style="left:281.3px;top:534px;" width="15" height="15" viewBox="0 0 15 15"><path d="M1.53 4.38 A6.7 6.7 0 1 1 1.53 9.62" fill="none" stroke="#b4b4b4" stroke-width="1.1"/><path d="M2.6 7 L6.1 4.3 V5.9 H12.5 V8.1 H6.1 V9.7Z" fill="#b4b4b4"/></svg>
<svg class="i" style="left:307px;top:535.8px;" width="14" height="11" viewBox="0 0 14 11"><path d="M0.6 5 Q7 -1.9 13.4 5 Q7 11.9 0.6 5Z" fill="none" stroke="#c4c4c4" stroke-width="1.1"/><circle cx="7" cy="4.6" r="2.7" fill="#c4c4c4"/></svg>
<svg class="i" style="left:45px;top:559px;" width="8" height="5" viewBox="0 0 8 5"><path d="M0 0 H8 L4 4.6Z" fill="#c0c0c0"/></svg>
<svg class="i" style="left:60px;top:553px;" width="16" height="16" viewBox="0 0 16 16"><path d="M0 3.2 L16 0 V2.6 L0 5.8Z" fill="#b0b0b0"/><rect x="0" y="7" width="16" height="9" fill="#b0b0b0"/></svg>
<span class="t" style="left:80.00px;top:555px;font-size:11px;line-height:12px;color:#e4e4e4;transform:scaleX(0.9610);">view3D</span>
<svg class="i" style="left:281.3px;top:554px;" width="15" height="15" viewBox="0 0 15 15"><path d="M1.53 4.38 A6.7 6.7 0 1 1 1.53 9.62" fill="none" stroke="#b4b4b4" stroke-width="1.1"/><path d="M2.6 7 L6.1 4.3 V5.9 H12.5 V8.1 H6.1 V9.7Z" fill="#b4b4b4"/></svg>
<svg class="i" style="left:307px;top:555.8px;" width="14" height="11" viewBox="0 0 14 11"><path d="M0.6 5 Q7 -1.9 13.4 5 Q7 11.9 0.6 5Z" fill="none" stroke="#c4c4c4" stroke-width="1.1"/><circle cx="7" cy="4.6" r="2.7" fill="#c4c4c4"/></svg>
<svg class="i" style="left:65px;top:579px;" width="8" height="5" viewBox="0 0 8 5"><path d="M0 0 H8 L4 4.6Z" fill="#c0c0c0"/></svg>
<svg class="i" style="left:80px;top:573px;" width="16" height="16" viewBox="0 0 16 16"><g fill="#b0b0b0"><path d="M0 3 L6.5 5.5 V16 L0 13.5Z"/><path d="M4.5 1.5 L7 0.8 L11 2.3 V13 L8 12 V4.5Z"/><path d="M9.5 0.8 L12 0 L16 1.5 V12.5 L12.5 11.2 V2Z"/></g></svg>
<span class="t" style="left:100.00px;top:575px;font-size:11px;line-height:12px;color:#e4e4e4;transform:scaleX(0.9423);">scene</span>
<svg class="i" style="left:281.3px;top:574px;" width="15" height="15" viewBox="0 0 15 15"><path d="M1.53 4.38 A6.7 6.7 0 1 1 1.53 9.62" fill="none" stroke="#b4b4b4" stroke-width="1.1"/><path d="M2.6 7 L6.1 4.3 V5.9 H12.5 V8.1 H6.1 V9.7Z" fill="#b4b4b4"/></svg>
<svg class="i" style="left:307px;top:575.8px;" width="14" height="11" viewBox="0 0 14 11"><path d="M0.6 5 Q7 -1.9 13.4 5 Q7 11.9 0.6 5Z" fill="none" stroke="#c4c4c4" stroke-width="1.1"/><circle cx="7" cy="4.6" r="2.7" fill="#c4c4c4"/></svg>
<svg class="i" style="left:100px;top:593px;" width="16" height="16" viewBox="0 0 16 16"><path d="M0.2 4.7 L4.1 0.2 L7 2 L16 5 V9.6 L10.8 11.4 L6.2 15.7 L3.2 7.2Z" fill="#b0b0b0"/><path d="M10.6 14 L15 10.4 L16 12.4 L12.8 15.8Z" fill="#b0b0b0"/></svg>
<span class="t" style="left:120.00px;top:595px;font-size:11px;line-height:12px;color:#e4e4e4;">directionalLight</span>
<svg class="i" style="left:281.3px;top:594px;" width="15" height="15" viewBox="0 0 15 15"><path d="M1.53 4.38 A6.7 6.7 0 1 1 1.53 9.62" fill="none" stroke="#b4b4b4" stroke-width="1.1"/><path d="M2.6 7 L6.1 4.3 V5.9 H12.5 V8.1 H6.1 V9.7Z" fill="#b4b4b4"/></svg>
<svg class="i" style="left:307px;top:595.8px;" width="14" height="11" viewBox="0 0 14 11"><path d="M0.6 5 Q7 -1.9 13.4 5 Q7 11.9 0.6 5Z" fill="none" stroke="#c4c4c4" stroke-width="1.1"/><circle cx="7" cy="4.6" r="2.7" fill="#c4c4c4"/></svg>
<svg class="i" style="left:100px;top:613px;" width="16" height="16" viewBox="0 0 16 16"><rect x="0" y="1.5" width="9.5" height="13" rx="1.5" fill="#b0b0b0"/><path d="M9 8 L16 1.5 V14.5Z" fill="#b0b0b0"/></svg>
<span class="t" style="left:120.00px;top:615px;font-size:11px;line-height:12px;color:#e4e4e4;transform:scaleX(0.9858);">camera</span>
<svg class="i" style="left:281.3px;top:614px;" width="15" height="15" viewBox="0 0 15 15"><path d="M1.53 4.38 A6.7 6.7 0 1 1 1.53 9.62" fill="none" stroke="#b4b4b4" stroke-width="1.1"/><path d="M2.6 7 L6.1 4.3 V5.9 H12.5 V8.1 H6.1 V9.7Z" fill="#b4b4b4"/></svg>
<svg class="i" style="left:307px;top:615.8px;" width="14" height="11" viewBox="0 0 14 11"><path d="M0.6 5 Q7 -1.9 13.4 5 Q7 11.9 0.6 5Z" fill="none" stroke="#c4c4c4" stroke-width="1.1"/><circle cx="7" cy="4.6" r="2.7" fill="#c4c4c4"/></svg>
<svg class="i" style="left:85px;top:639px;" width="8" height="5" viewBox="0 0 8 5"><path d="M0 0 H8 L4 4.6Z" fill="#c0c0c0"/></svg>
<svg class="i" style="left:100px;top:633px;" width="16" height="16" viewBox="0 0 16 16"><ellipse cx="8" cy="3.6" rx="6.4" ry="3.6" fill="#b0b0b0"/><path d="M1.6 6.2 Q8 10.4 14.4 6.2 V12.6 Q14.4 16 8 16 Q1.6 16 1.6 12.6Z" fill="#b0b0b0"/></svg>
<span class="t" style="left:120.00px;top:635px;font-size:11px;line-height:12px;color:#e4e4e4;transform:scaleX(0.9786);">cubeModel</span>
<svg class="i" style="left:281.3px;top:634px;" width="15" height="15" viewBox="0 0 15 15"><path d="M1.53 4.38 A6.7 6.7 0 1 1 1.53 9.62" fill="none" stroke="#b4b4b4" stroke-width="1.1"/><path d="M2.6 7 L6.1 4.3 V5.9 H12.5 V8.1 H6.1 V9.7Z" fill="#b4b4b4"/></svg>
<svg class="i" style="left:307px;top:635.8px;" width="14" height="11" viewBox="0 0 14 11"><path d="M0.6 5 Q7 -1.9 13.4 5 Q7 11.9 0.6 5Z" fill="none" stroke="#c4c4c4" stroke-width="1.1"/><circle cx="7" cy="4.6" r="2.7" fill="#c4c4c4"/></svg>
<svg class="i" style="left:120px;top:653px;" width="16" height="16" viewBox="0 0 16 16"><circle cx="8" cy="8" r="8" fill="#b0b0b0"/><circle cx="5.3" cy="5.8" r="2.4" fill="#252525"/></svg>
<span class="t" style="left:140.00px;top:655px;font-size:11px;line-height:12px;color:#e4e4e4;">cubeMaterial</span>
<svg class="i" style="left:281.3px;top:654px;" width="15" height="15" viewBox="0 0 15 15"><path d="M1.53 4.38 A6.7 6.7 0 1 1 1.53 9.62" fill="none" stroke="#b4b4b4" stroke-width="1.1"/><path d="M2.6 7 L6.1 4.3 V5.9 H12.5 V8.1 H6.1 V9.7Z" fill="#b4b4b4"/></svg>
<svg class="i" style="left:307px;top:655.8px;" width="14" height="11" viewBox="0 0 14 11"><path d="M0.6 5 Q7 -1.9 13.4 5 Q7 11.9 0.6 5Z" fill="none" stroke="#c4c4c4" stroke-width="1.1"/><circle cx="7" cy="4.6" r="2.7" fill="#c4c4c4"/></svg>
<div style="left:1077px;top:48px;width:289px;height:242px;background:#1a1a1a;"></div>
<div style="left:1077px;top:48px;width:81px;height:19px;background:#dcdcdc;"></div>
<span class="t" style="left:1085.50px;top:51px;font-size:11px;line-height:12px;color:#222;">Properties</span>
<svg class="i" style="left:1139.7px;top:52.3px;" width="12" height="12" viewBox="0 0 12 12"><path d="M1 1 L11 11 M11 1 L1 11" stroke="#222" stroke-width="1.1" fill="none"/></svg>
<svg class="i" style="left:1311.5px;top:48px;" width="52" height="19" viewBox="0 0 52 19"><g fill="none" stroke="#c4c4c4" stroke-width="1.1"><path d="M0.5 6.2 L7 13.4 L13.5 6.2"/><path d="M27.5 5 H21 Q19 5 19 7 V13 Q19 15.2 21 15.2 H28 Q30.2 15.2 30.2 13 V9"/><rect x="27.8" y="3.8" width="4.6" height="4.6"/><path d="M39.3 4.3 L49.5 14.8 M49.5 4.3 L39.3 14.8"/></g></svg>
<div style="left:1077px;top:86px;width:289px;height:194px;background:#262626;"></div>
<div style="left:1077px;top:67px;width:289px;height:19px;background:#1a1a1a;"></div>
<svg class="i" style="left:1082px;top:74px;" width="8" height="5" viewBox="0 0 8 5"><path d="M0 0 H8 L4 4.6Z" fill="#c0c0c0"/></svg>
<span class="t" style="left:1099.00px;top:69px;font-size:13px;line-height:15px;color:#fff;font-weight:bold;transform:scaleX(0.9456);">Type</span>
<div style="left:1077px;top:170px;width:289px;height:20px;background:#1a1a1a;"></div>
<svg class="i" style="left:1082px;top:178px;" width="8" height="5" viewBox="0 0 8 5"><path d="M0 0 H8 L4 4.6Z" fill="#c0c0c0"/></svg>
<span class="t" style="left:1099.00px;top:172.5px;font-size:13px;line-height:15px;color:#fff;font-weight:bold;transform:scaleX(0.9356);">Geometry</span>
<div style="left:1077px;top:246px;width:289px;height:20px;background:#1a1a1a;"></div>
<svg class="i" style="left:1082px;top:254px;" width="8" height="5" viewBox="0 0 8 5"><path d="M0 0 H8 L4 4.6Z" fill="#c0c0c0"/></svg>
<span class="t" style="left:1099.00px;top:248.5px;font-size:13px;line-height:15px;color:#fff;font-weight:bold;transform:scaleX(0.9165);">Visibility</span>
<span class="t" style="left:1085.00px;top:95px;font-size:13px;line-height:15px;color:#e0e0e0;transform:scaleX(0.9147);">Type</span>
<div style="left:1147px;top:90px;width:219px;height:24px;background:#333;"></div>
<span class="t" style="left:1163.00px;top:95px;font-size:13px;line-height:15px;color:#e0e0e0;transform:scaleX(0.9700);">Rectangle</span>
<span class="t" style="left:1085.00px;top:122px;font-size:13px;line-height:15px;color:#e0e0e0;transform:scaleX(0.9666);">id</span>
<div style="left:1147px;top:118px;width:230px;height:20px;background:#262626;border:1px solid #404040;"></div>
<span class="t" style="left:1085.00px;top:148px;font-size:13px;line-height:15px;color:#e0e0e0;transform:scaleX(0.9327);">Custo...</span>
<div style="left:1147px;top:144.5px;width:230px;height:19px;background:#262626;border:1px solid #484848;"></div>
<span class="t" style="left:1226.00px;top:149px;font-size:11.5px;line-height:12px;color:#f0f0f0;transform:scaleX(0.9318);">Add Annotation</span>
<span class="t" style="left:1085.00px;top:198px;font-size:13px;line-height:15px;color:#e0e0e0;transform:scaleX(1.0115);">Position</span>
<span class="t" style="left:1147.00px;top:198px;font-size:13px;line-height:15px;color:#e0e0e0;transform:scaleX(1.0126);">X</span>
<div style="left:1184px;top:194.5px;width:73px;height:19px;background:#262626;border:1px solid #404040;"></div>
<div style="left:1199px;top:195.5px;width:1px;height:19px;background:#404040;"></div>
<svg class="i" style="left:1187px;top:197.5px;" width="10" height="16" viewBox="0 0 10 16"><path d="M1 5.5 L5 1.2 L9 5.5 M1 10.5 L5 14.8 L9 10.5" fill="none" stroke="#8a8a8a" stroke-width="1"/></svg>
<span class="t" style="left:1248.00px;top:198px;font-size:13px;line-height:15px;color:#e0e0e0;transform:scaleX(1.0761);">0</span>
<span class="t" style="left:1271.00px;top:198px;font-size:13px;line-height:15px;color:#e0e0e0;transform:scaleX(0.9549);">Y</span>
<div style="left:1308px;top:194.5px;width:73px;height:19px;background:#262626;border:1px solid #404040;"></div>
<div style="left:1323px;top:195.5px;width:1px;height:19px;background:#404040;"></div>
<svg class="i" style="left:1311px;top:197.5px;" width="10" height="16" viewBox="0 0 10 16"><path d="M1 5.5 L5 1.2 L9 5.5 M1 10.5 L5 14.8 L9 10.5" fill="none" stroke="#8a8a8a" stroke-width="1"/></svg>
<span class="t" style="left:1085.00px;top:224px;font-size:13px;line-height:15px;color:#e0e0e0;transform:scaleX(0.9008);">Size</span>
<span class="t" style="left:1147.00px;top:224px;font-size:13px;line-height:15px;color:#e0e0e0;transform:scaleX(0.9601);">W</span>
<svg class="i" style="left:1167.5px;top:226px;" width="12" height="12" viewBox="0 0 12 12"><g fill="none" stroke="#2b90d0" stroke-width="1.6"><rect x="0.8" y="5" width="5.6" height="4.4" rx="2" transform="rotate(-50 3.6 7.2)"/><rect x="5.4" y="1.8" width="5.6" height="4.4" rx="2" transform="rotate(-50 8.2 4)"/></g></svg>
<div style="left:1184px;top:220.5px;width:73px;height:19px;background:#262626;border:1px solid #404040;"></div>
<div style="left:1199px;top:221.5px;width:1px;height:19px;background:#404040;"></div>
<svg class="i" style="left:1187px;top:223.5px;" width="10" height="16" viewBox="0 0 10 16"><path d="M1 5.5 L5 1.2 L9 5.5 M1 10.5 L5 14.8 L9 10.5" fill="none" stroke="#8a8a8a" stroke-width="1"/></svg>
<span class="t" style="left:1225.00px;top:224px;font-size:13px;line-height:15px;color:#2490d0;transform:scaleX(0.9462);">1 280</span>
<span class="t" style="left:1271.00px;top:224px;font-size:13px;line-height:15px;color:#e0e0e0;transform:scaleX(0.9352);">H</span>
<svg class="i" style="left:1291.5px;top:226px;" width="12" height="12" viewBox="0 0 12 12"><g fill="none" stroke="#2b90d0" stroke-width="1.6"><rect x="0.8" y="5" width="5.6" height="4.4" rx="2" transform="rotate(-50 3.6 7.2)"/><rect x="5.4" y="1.8" width="5.6" height="4.4" rx="2" transform="rotate(-50 8.2 4)"/></g></svg>
<div style="left:1308px;top:220.5px;width:73px;height:19px;background:#262626;border:1px solid #404040;"></div>
<div style="left:1323px;top:221.5px;width:1px;height:19px;background:#404040;"></div>
<svg class="i" style="left:1311px;top:223.5px;" width="10" height="16" viewBox="0 0 10 16"><path d="M1 5.5 L5 1.2 L9 5.5 M1 10.5 L5 14.8 L9 10.5" fill="none" stroke="#8a8a8a" stroke-width="1"/></svg>
<span class="t" style="left:1359.00px;top:224px;font-size:13px;line-height:15px;color:#2490d0;transform:scaleX(1.0761);">7</span>
<div style="left:1077px;top:266px;width:289px;height:14px;overflow:hidden">
<span class="t" style="left:8.00px;top:8px;font-size:13px;line-height:15px;color:#e0e0e0;">Visibility</span>
<div style="left:91px;top:4px;width:19px;height:19px;background:#262626;border:1px solid #404040;"></div>
<svg class="i" style="left:95px;top:9px;" width="14" height="12" viewBox="0 0 14 12"><path d="M1.5 7 L5 10.5 L12 1.5" fill="none" stroke="#e0e0e0" stroke-width="1.8"/></svg>
<span class="t" style="left:120.00px;top:8px;font-size:13px;line-height:15px;color:#e0e0e0;transform:scaleX(0.9227);">Is Visible</span>
<div style="left:259px;top:4px;width:19px;height:19px;background:#262626;border:1px solid #404040;"></div>
</div>
<div style="left:1077px;top:280px;width:289px;height:10px;background:#1a1a1a;"></div>
<div style="left:1077px;top:280px;width:245px;height:10px;background:#5a5b5d;"></div>
<div style="left:1077px;top:290px;width:289px;height:387px;background:#1a1a1a;"></div>
<div style="left:1077px;top:291px;width:108px;height:19px;background:#dcdcdc;"></div>
<span class="t" style="left:1085.00px;top:294px;font-size:11px;line-height:12px;color:#222;transform:scaleX(0.9431);">Connection View</span>
<svg class="i" style="left:1166.7px;top:295.3px;" width="12" height="12" viewBox="0 0 12 12"><path d="M1 1 L11 11 M11 1 L1 11" stroke="#222" stroke-width="1.1" fill="none"/></svg>
<svg class="i" style="left:1311.5px;top:291px;" width="52" height="19" viewBox="0 0 52 19"><g fill="none" stroke="#c4c4c4" stroke-width="1.1"><path d="M0.5 6.2 L7 13.4 L13.5 6.2"/><path d="M27.5 5 H21 Q19 5 19 7 V13 Q19 15.2 21 15.2 H28 Q30.2 15.2 30.2 13 V9"/><rect x="27.8" y="3.8" width="4.6" height="4.6"/><path d="M39.3 4.3 L49.5 14.8 M49.5 4.3 L39.3 14.8"/></g></svg>
<div style="left:1077px;top:310px;width:92px;height:22px;background:#dcdcdc;"></div>
<div style="left:1169px;top:310px;width:184px;height:22px;background:#0c0c0c;"></div>
<div style="left:1353px;top:310px;width:13px;height:22px;background:#262626;"></div>
<div style="left:1077px;top:332px;width:289px;height:4px;background:#dcdcdc;"></div>
<span class="t" style="left:1093.00px;top:315px;font-size:11px;line-height:12px;color:#1a1a1a;font-weight:bold;transform:scaleX(0.8956);">Connections</span>
<span class="t" style="left:1194.00px;top:315px;font-size:11px;line-height:12px;color:#f0f0f0;font-weight:bold;transform:scaleX(0.9067);">Bindings</span>
<span class="t" style="left:1282.00px;top:315px;font-size:11px;line-height:12px;color:#f0f0f0;font-weight:bold;transform:scaleX(0.9311);">Properties</span>
<svg class="i" style="left:1084px;top:342px;" width="12" height="12" viewBox="0 0 12 12"><path d="M6 0 V12 M0 6 H12" stroke="#e0e0e0" stroke-width="1.6" fill="none"/></svg>
<div style="left:1108px;top:347px;width:12px;height:2px;background:#606060;"></div>
<div style="left:1077px;top:360px;width:289px;height:306px;background:#262626;"></div>
<div style="left:1079px;top:362px;width:74px;height:27.5px;background:#4b4b4b;border:1px solid #0c0c0c;"></div>
<div style="left:1159px;top:362px;width:154px;height:27.5px;background:#4b4b4b;border:1px solid #0c0c0c;"></div>
<div style="left:1319px;top:362px;width:58px;height:27.5px;background:#4b4b4b;border:1px solid #0c0c0c;"></div>
<span class="t" style="left:1101.00px;top:371px;font-size:11px;line-height:12px;color:#e4e4e4;transform:scaleX(1.0356);">Target</span>
<span class="t" style="left:1202.00px;top:371px;font-size:11px;line-height:12px;color:#e4e4e4;transform:scaleX(0.9516);">Signal Handler</span>
<div style="left:1077px;top:666px;width:289px;height:10px;background:#1a1a1a;"></div>
<div style="left:1077px;top:666px;width:96px;height:10px;background:#5c5d5f;"></div>
<span class="t" style="left:11.00px;top:4px;font-size:11px;line-height:12px;color:#dcdcdc;transform:scaleX(0.9399);"><u>F</u>ile</span>
<span class="t" style="left:42.30px;top:4px;font-size:11px;line-height:12px;color:#dcdcdc;transform:scaleX(0.9686);"><u>E</u>dit</span>
<span class="t" style="left:74.00px;top:4px;font-size:11px;line-height:12px;color:#dcdcdc;transform:scaleX(0.9877);"><u>B</u>uild</span>
<span class="t" style="left:112.00px;top:4px;font-size:11px;line-height:12px;color:#dcdcdc;transform:scaleX(0.9767);"><u>D</u>ebug</span>
<span class="t" style="left:157.00px;top:4px;font-size:11px;line-height:12px;color:#dcdcdc;transform:scaleX(0.9751);"><u>A</u>nalyze</span>
<span class="t" style="left:208.00px;top:4px;font-size:11px;line-height:12px;color:#dcdcdc;transform:scaleX(1.0382);"><u>T</u>ools</span>
<span class="t" style="left:248.00px;top:4px;font-size:11px;line-height:12px;color:#dcdcdc;transform:scaleX(0.9882);"><u>W</u>indow</span>
<span class="t" style="left:300.00px;top:4px;font-size:11px;line-height:12px;color:#dcdcdc;"><u>H</u>elp</span>
<div style="left:0px;top:20px;width:1366px;height:1px;background:#202020;"></div>
<div style="left:39px;top:47px;width:1327px;height:1px;background:#242424;"></div>
<svg class="i" style="left:47px;top:27px;" width="11" height="15" viewBox="0 0 11 15"><path d="M8.4 2 L2.3 7.6 L8.4 13.2" fill="none" stroke="#ecae1e" stroke-width="1.6"/></svg>
<svg class="i" style="left:71px;top:27px;" width="11" height="15" viewBox="0 0 11 15"><path d="M2.6 2 L8.7 7.6 L2.6 13.2" fill="none" stroke="#6a6a6a" stroke-width="1.6"/></svg>
<svg class="i" style="left:94px;top:27px;" width="14" height="14" viewBox="0 0 14 14"><rect x="1" y="6.5" width="8" height="6.5" fill="#686868"/><rect x="4" y="8.5" width="2" height="2.5" fill="#1a1a1a"/><path d="M7.5 6.5 V4 Q7.5 1.5 10 1.5 Q12.5 1.5 12.5 4 V6" fill="none" stroke="#686868" stroke-width="1.3"/></svg>
<svg class="i" style="left:118px;top:26px;" width="15" height="17" viewBox="0 0 15 17"><path d="M1 0.5 H9.5 L13.5 4.5 V16 H1Z" fill="#f4f4f4"/><path d="M9.5 0.5 V4.5 H13.5Z" fill="#b8b8b8"/><text x="1.2" y="14.6" font-family="Liberation Sans, sans-serif" font-size="8" font-weight="bold" fill="#1a7fbf" textLength="12.6" lengthAdjust="spacingAndGlyphs">qml</text></svg>
<span class="t" style="left:141.00px;top:28px;font-size:11px;line-height:12px;color:#d4d4d4;transform:scaleX(0.9510);">Screen01.ui.qml*</span>
<svg class="i" style="left:307px;top:29px;" width="8" height="11" viewBox="0 0 8 11"><path d="M0 4.2 L4 0 L8 4.2Z M0 6.6 L8 6.6 L4 10.8Z" fill="#c8c8c8"/></svg>
<div style="left:319px;top:26px;width:1px;height:16px;background:#5a5a5a;"></div>
<svg class="i" style="left:326px;top:28px;" width="12" height="12" viewBox="0 0 12 12"><path d="M1.5 1.5 L10.5 10.5 M10.5 1.5 L1.5 10.5" stroke="#c8c8c8" stroke-width="1.2" fill="none"/></svg>
<div style="left:343px;top:26px;width:1px;height:16px;background:#5a5a5a;"></div>
<svg class="i" style="left:386px;top:26px;" width="16" height="16" viewBox="0 0 16 16"><circle cx="8" cy="8" r="6.6" fill="none" stroke="#c8c8c8" stroke-width="1.3"/><circle cx="8" cy="8" r="4.6" fill="none" stroke="#c8c8c8" stroke-width="0.8"/><path d="M6.3 5 L11 8 L6.3 11Z" fill="#c8c8c8"/></svg>
<span class="t" style="left:412.00px;top:28px;font-size:11px;line-height:12px;color:#d4d4d4;transform:scaleX(0.8227);">100 %</span>
<svg class="i" style="left:453px;top:29px;" width="8" height="11" viewBox="0 0 8 11"><path d="M0 4.2 L4 0 L8 4.2Z M0 6.6 L8 6.6 L4 10.8Z" fill="#c8c8c8"/></svg>
<span class="t" style="left:476.00px;top:28px;font-size:11px;line-height:12px;color:#d4d4d4;transform:scaleX(1.0518);">Default</span>
<svg class="i" style="left:538px;top:29px;" width="8" height="11" viewBox="0 0 8 11"><path d="M0 4.2 L4 0 L8 4.2Z M0 6.6 L8 6.6 L4 10.8Z" fill="#c8c8c8"/></svg>
<div style="left:550px;top:26px;width:1px;height:16px;background:#5a5a5a;"></div>
<div style="left:554px;top:26px;width:1px;height:16px;background:#5a5a5a;"></div>
<svg class="i" style="left:562px;top:26px;" width="16" height="16" viewBox="0 0 16 16"><g fill="none" stroke="#5c5c5c" stroke-width="1.1"><path d="M7.5 2 V10 M1.5 8 H9 M5.5 4 L7.5 1.5 L9.5 4 M3.5 6 L1 8 L3.5 10"/><circle cx="11" cy="11.5" r="3.6"/><path d="M9.5 11.5 H12.5 M10.5 10.3 L9.3 11.5 L10.5 12.7"/></g></svg>
<svg class="i" style="left:585px;top:26.7px;" width="17" height="17" viewBox="0 0 17 17"><g fill="none" stroke="#d0d0d0" stroke-width="1.2"><rect x="1.5" y="1.5" width="13" height="11.5"/><path d="M4 7 V4 H7 M9 4 H12 V6 M4 8.5 V10.5 H7"/></g><circle cx="11.8" cy="12" r="3.6" fill="#e27d72"/><path d="M10 12 H13.2 M11.2 10.8 L10 12 L11.2 13.2" stroke="#1a1a1a" stroke-width="0.9" fill="none"/></svg>
<div style="left:608px;top:26px;width:1px;height:16px;background:#5a5a5a;"></div>
<svg class="i" style="left:614px;top:26px;" width="17" height="16" viewBox="0 0 17 16"><g fill="none" stroke="#555" stroke-width="1.1"><rect x="4" y="3.5" width="9" height="9"/><path d="M1.5 2 V14 M15.5 2 V14 M3 1 H14 M3 15 H14"/></g></svg>
<svg class="i" style="left:638px;top:26px;" width="17" height="16" viewBox="0 0 17 16"><g fill="none" stroke="#555" stroke-width="1.1"><path d="M1.5 2 V14 M15.5 2 V9 M3 1 H14 M3 15 H9"/><rect x="4" y="3.5" width="8" height="8"/><circle cx="12.5" cy="12" r="3.4" fill="#1a1a1a"/><path d="M11 12 H14 M12 11 L11 12 L12 13"/></g></svg>
<div style="left:662px;top:26px;width:1px;height:16px;background:#5a5a5a;"></div>
<svg class="i" style="left:671px;top:30px;" width="13" height="8" viewBox="0 0 13 8"><g fill="none" stroke="#4e4e4e" stroke-width="1"><rect x="0.5" y="0.5" width="3.8" height="6.6"/><rect x="4.3" y="0.5" width="3.8" height="6.6"/><rect x="8.1" y="0.5" width="3.8" height="6.6"/></g></svg>
<svg class="i" style="left:697px;top:28px;" width="8" height="13" viewBox="0 0 8 13"><g fill="none" stroke="#4e4e4e" stroke-width="1"><rect x="0.5" y="0.5" width="6.6" height="3.9"/><rect x="0.5" y="4.4" width="6.6" height="3.9"/><rect x="0.5" y="8.3" width="6.6" height="3.9"/></g></svg>
<svg class="i" style="left:719px;top:30px;" width="13" height="10" viewBox="0 0 13 10"><g fill="none" stroke="#4e4e4e" stroke-width="1"><rect x="0.5" y="0.5" width="5.6" height="4.2"/><rect x="6.6" y="0.5" width="5.6" height="4.2"/><rect x="0.5" y="5.2" width="5.6" height="4.2"/><rect x="6.6" y="5.2" width="5.6" height="4.2"/></g></svg>
<div style="left:740px;top:26px;width:1px;height:16px;background:#5a5a5a;"></div>
<svg class="i" style="left:746px;top:26px;" width="17" height="17" viewBox="0 0 17 17"><path d="M11 2 H5 Q1.5 2 1.5 5.5 V11 Q1.5 14.5 5 14.5 H11 Q14.5 14.5 14.5 11 V8" fill="none" stroke="#c8c8c8" stroke-width="1.2"/><path d="M6 11.5 L14.8 2.6" stroke="#c8c8c8" stroke-width="2" fill="none"/></svg>
<div style="left:769px;top:25px;width:64px;height:17px;background:#262626;"></div>
<span class="t" style="left:771.00px;top:28px;font-size:11px;line-height:12px;color:#d4d4d4;transform:scaleX(1.0518);">Default</span>
<svg class="i" style="left:841px;top:32px;" width="8" height="5" viewBox="0 0 8 5"><path d="M0 0 H8 L4 4.6Z" fill="#c8c8c8"/></svg>
<div style="left:853px;top:26px;width:1px;height:16px;background:#5a5a5a;"></div>
<svg class="i" style="left:963px;top:29px;" width="8" height="11" viewBox="0 0 8 11"><path d="M0 4.2 L4 0 L8 4.2Z M0 6.6 L8 6.6 L4 10.8Z" fill="#505050"/></svg>
<div style="left:975px;top:26px;width:1px;height:16px;background:#5a5a5a;"></div>
<span class="t" style="left:1225.00px;top:28px;font-size:11px;line-height:12px;color:#d4d4d4;transform:scaleX(0.9745);">3D Preset</span>
<svg class="i" style="left:1327px;top:29px;" width="8" height="11" viewBox="0 0 8 11"><path d="M0 4.2 L4 0 L8 4.2Z M0 6.6 L8 6.6 L4 10.8Z" fill="#c8c8c8"/></svg>
<div style="left:1339px;top:26px;width:1px;height:16px;background:#5a5a5a;"></div>
<svg class="i" style="left:1344px;top:27px;" width="17" height="13" viewBox="0 0 17 13"><path d="M0.5 0.5 H16.5 V9 H6 L2.5 12.5 V9 H0.5Z" fill="#c8c8c8"/></svg>
<div style="left:0px;top:21px;width:39px;height:682px;background:#181818;"></div>
<svg class="i" style="left:9px;top:54px;" width="19" height="19" viewBox="0 0 19 19"><g fill="#b0b0b0"><rect x="0" y="0" width="5" height="5"/><rect x="7" y="0" width="5" height="5"/><rect x="14" y="0" width="5" height="5"/><rect x="0" y="7" width="5" height="5"/><rect x="7" y="7" width="5" height="5"/><rect x="14" y="7" width="5" height="5"/><rect x="0" y="14" width="5" height="5"/><rect x="7" y="14" width="5" height="5"/><rect x="14" y="14" width="5" height="5"/></g></svg>
<svg class="i" style="left:9px;top:92px;" width="19" height="19" viewBox="0 0 19 19"><rect width="19" height="19" fill="#b4b4b4"/><path d="M4 5.5 H15 M4 8 H15 M4 10.5 H15 M4 13.5 H13" stroke="#1a1a1a" stroke-width="1.1"/></svg>
<div style="left:0px;top:121px;width:38.5px;height:38px;background:#000;"></div>
<div style="left:0px;top:121px;width:2px;height:38px;background:#c8c8c8;"></div>
<svg class="i" style="left:7px;top:129px;" width="24" height="24" viewBox="0 0 24 24"><path d="M1.5 20.5 L3.5 15.2 L15.8 3.6 L19.8 7.8 L7.2 19.2 Z" fill="#cf6d10"/><path d="M17 2.5 L18.6 1 L22.5 5 L21 6.6Z" fill="#cf6d10"/></svg>
<svg class="i" style="left:8px;top:167px;" width="22" height="21" viewBox="0 0 22 21"><g fill="#b0b0b0"><ellipse cx="11" cy="4.6" rx="4.6" ry="3.8"/><path d="M10.3 6.2 V20.2 Q2.8 18.5 2.8 11.5 Q2.8 8 5 6.2Z"/><path d="M11.7 6.2 V20.2 Q19.2 18.5 19.2 11.5 Q19.2 8 17 6.2Z"/></g><g stroke="#b0b0b0" stroke-width="1.3" fill="none"><path d="M4 8 L1.2 5.6 M3 12.6 H0.4 M4.2 17 L1.6 19.2 M18 8 L20.8 5.6 M19 12.6 H21.6 M17.8 17 L20.4 19.2"/></g></svg>
<svg class="i" style="left:8px;top:206px;" width="22" height="21" viewBox="0 0 22 21"><path d="M3.2 17.8 L12.5 8.8" stroke="#b0b0b0" stroke-width="4.2" stroke-linecap="round" fill="none"/><circle cx="15" cy="6.6" r="5.6" fill="#b0b0b0"/><path d="M15.6 6 L22 -0.4" stroke="#1a1a1a" stroke-width="3.8" fill="none"/></svg>
<svg class="i" style="left:9px;top:244px;" width="20" height="20" viewBox="0 0 20 20"><circle cx="10" cy="10" r="9.8" fill="#b0b0b0"/><text x="10" y="15.2" text-anchor="middle" font-family="Liberation Sans, sans-serif" font-weight="bold" font-size="15" fill="#1a1a1a">?</text></svg>
<div style="left:0px;top:542px;width:39px;height:1px;background:#505050;"></div>
<svg class="i" style="left:6px;top:555px;" width="32" height="26" viewBox="0 0 32 26"><rect x="1.8" y="1.8" width="22.4" height="17" rx="2" fill="#404040" stroke="#d0d0d0" stroke-width="1.8"/><path d="M10 19.5 H16 L18 24.5 H8Z" fill="#d0d0d0"/><path d="M27 8 L30 10.5 L27 13Z" fill="#d0d0d0"/></svg>
<svg class="i" style="left:10px;top:594px;" width="19" height="22" viewBox="0 0 19 22"><path d="M0 0.5 L18.5 11 L0 21.5Z" fill="#8ec163"/></svg>
<svg class="i" style="left:10px;top:632px;" width="22" height="24" viewBox="0 0 22 24"><path d="M0 0.5 L18.5 11 L0 21.5Z" fill="#8ec163"/><g transform="translate(6.5,10.5)"><ellipse cx="6.5" cy="7" rx="5.6" ry="6.6" fill="#1a1a1a"/><path d="M6.5 1.2 Q8.6 1.2 9.2 3.2 H3.8 Q4.4 1.2 6.5 1.2Z M3.2 3.9 H6.1 V11.6 Q3.2 11 3.2 7.8Z M9.8 3.9 H6.9 V11.6 Q9.8 11 9.8 7.8Z" fill="#d8d8d8"/><path d="M3.2 5 L1 3.6 M3.2 7.3 H0.8 M3.4 9.4 L1.2 11 M9.8 5 L12 3.6 M9.8 7.3 H12.2 M9.6 9.4 L11.8 11" stroke="#d8d8d8" stroke-width="0.9" fill="none"/></g></svg>
<svg class="i" style="left:6px;top:669px;" width="26" height="24" viewBox="0 0 26 24"><path d="M3 21 L15 8.5" stroke="#6a6a6a" stroke-width="3" fill="none"/><path d="M12 5 L17 1 L24.5 8.5 L22 11 L18.5 7.5 L15.5 10Z" fill="#6a6a6a"/></svg>
<svg class="i" style="left:47px;top:685px;" width="12" height="11" viewBox="0 0 12 11"><rect x="0.5" y="0.5" width="10.5" height="9.5" fill="none" stroke="#8a8a8a" stroke-width="1"/><rect x="0.5" y="0.5" width="4.5" height="9.5" fill="#8a8a8a"/></svg>
<div style="left:71px;top:680px;width:201px;height:20px;background:#262626;"></div>
<svg class="i" style="left:77px;top:683px;" width="16" height="15" viewBox="0 0 16 15"><circle cx="9" cy="6" r="4.6" fill="none" stroke="#c0c0c0" stroke-width="1.4"/><path d="M5.8 9.4 L1.5 13.5" stroke="#c0c0c0" stroke-width="1.6"/><path d="M9.5 12 H13.5 L11.5 14Z" fill="#c0c0c0"/></svg>
<span class="t" style="left:98.00px;top:685px;font-size:11px;line-height:12px;color:#767676;transform:scaleX(0.9355);">Type to locate (Ctrl+K)</span>
<div style="left:275px;top:679px;width:1px;height:22px;background:#4a4a4a;"></div>
<span class="t" style="left:286.00px;top:685px;font-size:11px;line-height:12px;color:#d4d4d4;transform:scaleX(0.7617);">1</span>
<span class="t" style="left:299.00px;top:685px;font-size:11px;line-height:12px;color:#d4d4d4;transform:scaleX(0.9644);">Issues</span>
<span class="t" style="left:346.00px;top:685px;font-size:11px;line-height:12px;color:#d4d4d4;transform:scaleX(0.9252);">2</span>
<span class="t" style="left:360.00px;top:685px;font-size:11px;line-height:12px;color:#d4d4d4;transform:scaleX(0.9607);">Search Results</span>
<span class="t" style="left:449.00px;top:685px;font-size:11px;line-height:12px;color:#d4d4d4;transform:scaleX(0.9252);">3</span>
<span class="t" style="left:462.00px;top:685px;font-size:11px;line-height:12px;color:#d4d4d4;transform:scaleX(0.9863);">Application Output</span>
<span class="t" style="left:567.00px;top:685px;font-size:11px;line-height:12px;color:#d4d4d4;transform:scaleX(0.9252);">5</span>
<span class="t" style="left:581.00px;top:685px;font-size:11px;line-height:12px;color:#d4d4d4;transform:scaleX(0.9361);">QML Debugger Console</span>
<span class="t" style="left:708.00px;top:685px;font-size:11px;line-height:12px;color:#d4d4d4;transform:scaleX(0.9252);">6</span>
<span class="t" style="left:722.00px;top:685px;font-size:11px;line-height:12px;color:#d4d4d4;transform:scaleX(0.9603);">General Messages</span>
<svg class="i" style="left:827px;top:685px;" width="8" height="11" viewBox="0 0 8 11"><path d="M0 4.2 L4 0 L8 4.2Z M0 6.6 L8 6.6 L4 10.8Z" fill="#c8c8c8"/></svg>
<div style="left:1311px;top:680px;width:24px;height:20px;background:#0f0f0f;"></div>
<svg class="i" style="left:1316px;top:684px;" width="15" height="12" viewBox="0 0 15 12"><path d="M10.5 0.5 L13 3 H8Z" fill="#c8c8c8"/><rect x="0.8" y="6.5" width="13" height="4" rx="1.5" fill="none" stroke="#c8c8c8" stroke-width="1.2"/><rect x="2" y="7.7" width="7" height="1.8" fill="#c8c8c8"/></svg>
<svg class="i" style="left:1348px;top:685px;" width="12" height="11" viewBox="0 0 12 11"><rect x="0.5" y="0.5" width="10.5" height="9.5" fill="none" stroke="#8a8a8a" stroke-width="1"/><rect x="6" y="0.5" width="5" height="9.5" fill="#8a8a8a"/></svg>
</body></html>
